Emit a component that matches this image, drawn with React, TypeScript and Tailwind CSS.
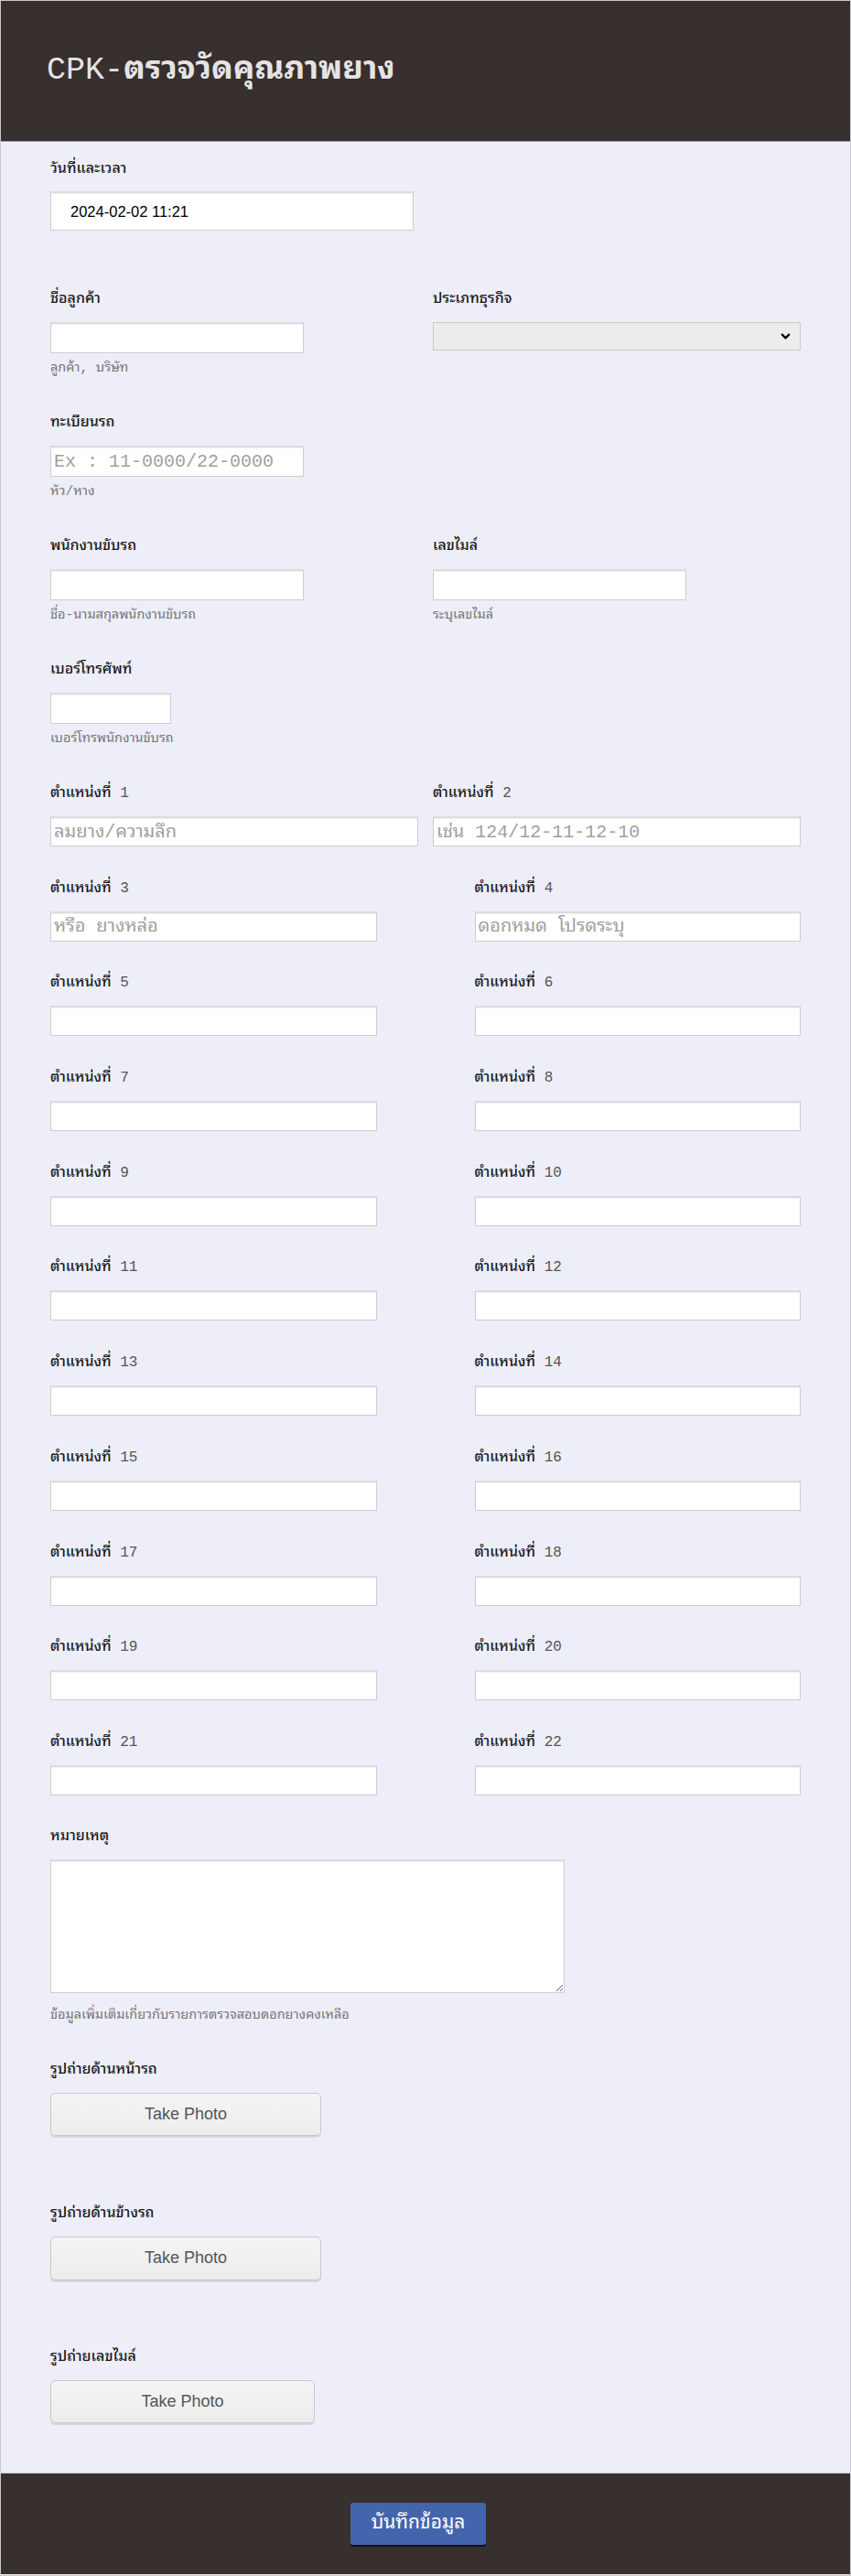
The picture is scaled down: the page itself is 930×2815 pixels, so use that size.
import { ChevronDown } from "lucide-react"

const mono = "font-['Liberation_Mono','Courier_New','Noto_Sans_Thai_Looped','Loma','Garuda','Tahoma','Noto_Sans_Thai',monospace]"
const sans = "font-['Liberation_Sans',Arial,'Noto_Sans_Thai_Looped','Tahoma','Noto_Sans_Thai',sans-serif]"

const inputCls =
  "block bg-white border border-[#cdcdd2] border-t-2 border-t-[#dcdce0] shadow-[inset_0_1px_1px_rgba(0,0,0,0.06)] px-[3px] text-[20px] text-[#333] placeholder:text-[#a0a0a0] outline-none"

const positions = [
  { n: 3, ph: "หรือ ยางหล่อ" },
  { n: 4, ph: "ดอกหมด โปรดระบุ" },
  { n: 5 }, { n: 6 }, { n: 7 }, { n: 8 }, { n: 9 }, { n: 10 },
  { n: 11 }, { n: 12 }, { n: 13 }, { n: 14 }, { n: 15 }, { n: 16 },
  { n: 17 }, { n: 18 }, { n: 19 }, { n: 20 }, { n: 21 }, { n: 22 },
]

function Label({ children }: { children: React.ReactNode }) {
  return <div className="h-[20px] leading-[20px] text-[16px] font-medium text-[#1a1a1a] whitespace-nowrap">{children}</div>
}

function Sub({ children }: { children: React.ReactNode }) {
  return <div className="mt-[8px] h-[16px] leading-[16px] text-[14.5px] text-[#777] whitespace-nowrap">{children}</div>
}

function PosLabel({ n }: { n: number }) {
  return (
    <Label>
      ตำแหน่งที่ <span className="font-normal text-[#555]">{n}</span>
    </Label>
  )
}

function PhotoButton({ w, h }: { w: string; h: string }) {
  return (
    <button
      className={`${w} ${h} mt-[15px] block rounded-[5px] border border-[#c9c9c9] bg-gradient-to-b from-[#f4f4f4] to-[#ededed] shadow-[0_2px_0_#d6d6dc] text-[18px] text-[#555] ${sans}`}
    >
      Take Photo
    </button>
  )
}

export default function App() {
  return (
    <div className={`w-[930px] min-h-[2815px] bg-[#eeeef9] border border-[#c8c8d0] ${mono}`}>
      <header className="h-[154px] bg-[#382f2f] border-b border-[#9a96a0] flex items-center pl-[50px]">
        <h1 className="text-[35px] text-[#e4e4e4] whitespace-nowrap">
          CPK-<span className="font-bold">ตรวจวัดคุณภาพยาง</span>
        </h1>
      </header>

      <main className="px-[54px] pt-[20px] pb-[54px]">
        {/* date */}
        <Label>วันที่และเวลา</Label>
        <div className={`${inputCls} mt-[14px] w-[397px] h-[43px] pl-[21px] flex items-center !text-[16.5px] text-black ${sans}`}>
          2024-02-02 11:21
        </div>

        {/* customer / business */}
        <div className="mt-[65px] grid grid-cols-2 gap-x-[16px]">
          <div>
            <Label>ชื่อลูกค้า</Label>
            <input className={`${inputCls} mt-[15px] w-[277px] h-[34px]`} />
            <Sub>ลูกค้า, บริษัท</Sub>
          </div>
          <div>
            <Label>ประเภทธุรกิจ</Label>
            <div className="relative mt-[15px] w-[402px] h-[31px]">
              <select className="appearance-none w-full h-full bg-[#ececec] border border-[#cbcbcb] outline-none" />
              <ChevronDown className="absolute right-[9px] top-[8px] w-[15px] h-[15px] text-black pointer-events-none" strokeWidth={3.5} />
            </div>
          </div>
        </div>

        {/* plate */}
        <div className="mt-[42px]">
          <Label>ทะเบียนรถ</Label>
          <input className={`${inputCls} mt-[15px] w-[277px] h-[34px]`} placeholder="Ex : 11-0000/22-0000" />
          <Sub>หัว/หาง</Sub>
        </div>

        {/* driver / mileage */}
        <div className="mt-[42px] grid grid-cols-2 gap-x-[16px]">
          <div>
            <Label>พนักงานขับรถ</Label>
            <input className={`${inputCls} mt-[15px] w-[277px] h-[34px]`} />
            <Sub>ชื่อ-นามสกุลพนักงานขับรถ</Sub>
          </div>
          <div>
            <Label>เลขไมล์</Label>
            <input className={`${inputCls} mt-[15px] w-[277px] h-[34px]`} />
            <Sub>ระบุเลขไมล์</Sub>
          </div>
        </div>

        {/* phone */}
        <div className="mt-[42px]">
          <Label>เบอร์โทรศัพท์</Label>
          <input className={`${inputCls} mt-[15px] w-[132px] h-[34px]`} />
          <Sub>เบอร์โทรพนักงานขับรถ</Sub>
        </div>

        {/* positions 1-2 */}
        <div className="mt-[42px] grid grid-cols-2 gap-x-[16px]">
          <div>
            <PosLabel n={1} />
            <input className={`${inputCls} mt-[15px] w-full h-[33px]`} placeholder="ลมยาง/ความลึก" />
          </div>
          <div>
            <PosLabel n={2} />
            <input className={`${inputCls} mt-[15px] w-full h-[33px]`} placeholder="เช่น 124/12-11-12-10" />
          </div>
        </div>

        {/* positions 3-22 */}
        <div className="mt-[35.7px] grid grid-cols-2 gap-x-[107px] gap-y-[35.7px]">
          {positions.map((p) => (
            <div key={p.n}>
              <PosLabel n={p.n} />
              <input className={`${inputCls} mt-[15px] w-full h-[33px]`} placeholder={p.ph} />
            </div>
          ))}
        </div>

        {/* note */}
        <div className="mt-[35px]">
          <Label>หมายเหตุ</Label>
          <textarea className={`${inputCls} mt-[15px] w-[562px] h-[146px]`} />
          <div className="mt-[16px] h-[16px] leading-[16px] text-[14.5px] text-[#777] whitespace-nowrap">
            ข้อมูลเพิ่มเติมเกี่ยวกับรายการตรวจสอบดอกยางคงเหลือ
          </div>
        </div>

        {/* photos */}
        <div className="mt-[42px]">
          <Label>รูปถ่ายด้านหน้ารถ</Label>
          <PhotoButton w="w-[296px]" h="h-[47px]" />
        </div>
        <div className="mt-[75px]">
          <Label>รูปถ่ายด้านข้างรถ</Label>
          <PhotoButton w="w-[296px]" h="h-[48px]" />
        </div>
        <div className="mt-[74px]">
          <Label>รูปถ่ายเลขไมล์</Label>
          <PhotoButton w="w-[289px]" h="h-[47px]" />
        </div>
      </main>

      <footer className="h-[111px] bg-[#382f2f] border-t border-[#c8c8d0] flex justify-center pt-[32px] pr-[16px]">
        <button className="w-[148px] h-[46px] rounded-[3px] bg-[#4564ae] text-white text-[21px] shadow-[0_2px_0_#111]">
          บันทึกข้อมูล
        </button>
      </footer>
    </div>
  )
}
